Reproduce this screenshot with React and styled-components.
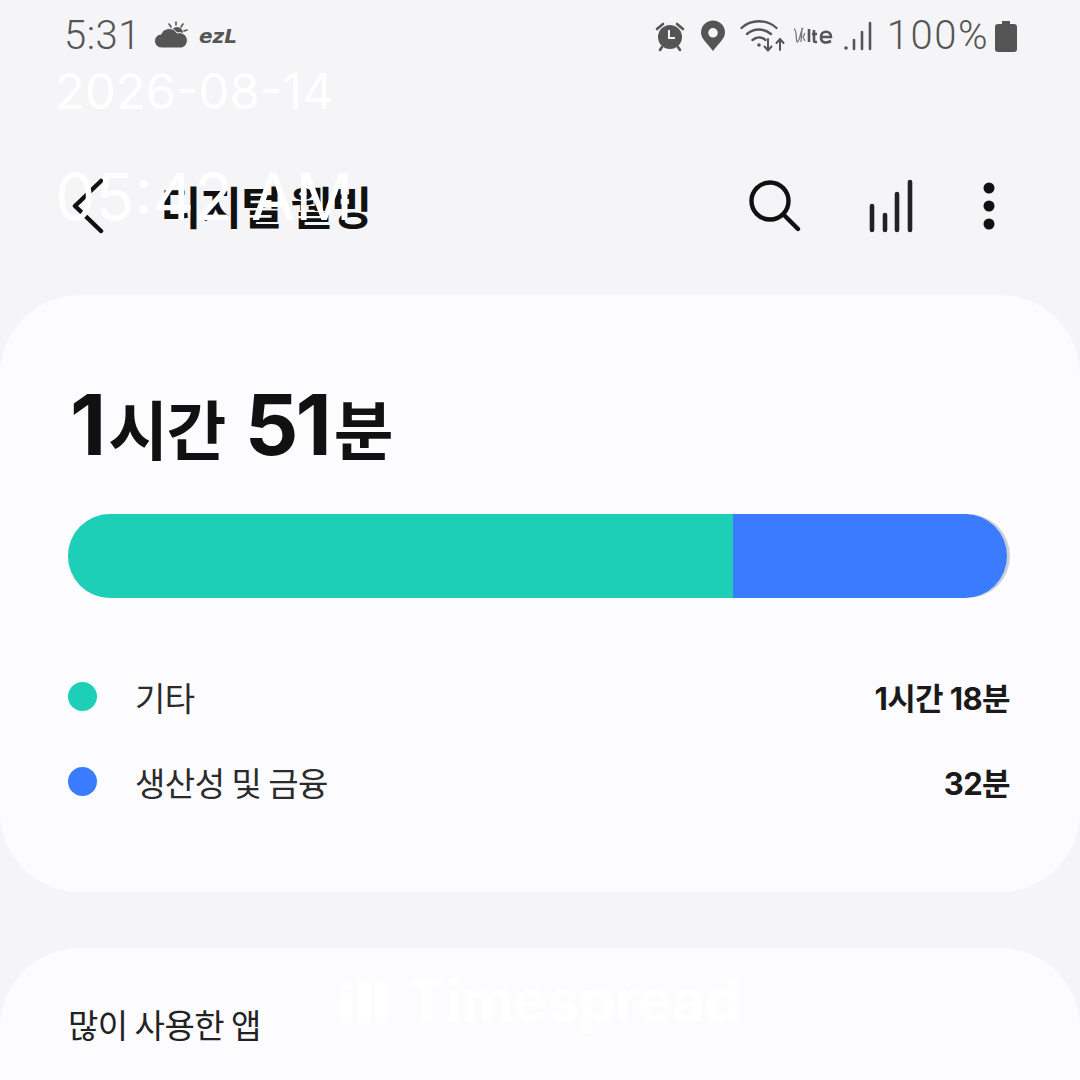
import React from "react";
import styled, { createGlobalStyle } from "styled-components";

const usage = [
  { label: "기타", value: "1시간 18분", color: "#1dcfb6", share: 70.6 },
  { label: "생산성 및 금융", value: "32분", color: "#3a7bff", share: 29.1 },
];

const GlobalStyle = createGlobalStyle`
  html, body {
    margin: 0;
    padding: 0;
    background: #f5f5f7;
  }
  body {
    font-family: "Inter", "Noto Sans CJK KR", sans-serif;
  }
`;

const Page = styled.div`
  position: relative;
  width: 1080px;
  height: 1080px;
  overflow: hidden;
  background: #f5f5f7;
`;

const StatusBar = styled.div`
  display: flex;
  align-items: center;
  justify-content: space-between;
  height: 72px;
  padding: 0 63px 0 64px;
  color: #555;
`;

const StatusGroup = styled.div`
  display: flex;
  align-items: center;
`;

const StatusSlot = styled.span`
  display: flex;
  align-items: center;
  margin-left: ${(p) => p.$ml || 0}px;
`;

const StatusText = styled.span`
  font-family: "Roboto", sans-serif;
  font-size: 40px;
  font-weight: 300;
  letter-spacing: ${(p) => p.$spacing || 0.5}px;
  line-height: 1;
  margin-left: ${(p) => p.$ml || 0}px;
`;

const Carrier = styled.span`
  font-family: "DejaVu Sans", sans-serif;
  font-size: 20px;
  font-weight: 700;
  font-style: italic;
  color: #555;
  margin-left: 10px;
`;

const Header = styled.header`
  display: flex;
  align-items: center;
  height: 179px;
  padding: 44px 85px 0 72px;
`;

const BackButton = styled.div`
  display: flex;
  width: 88px;
`;

const Title = styled.h1`
  flex: 1;
  margin: 0;
  font-family: "Noto Sans CJK KR", sans-serif;
  font-size: 45px;
  font-weight: 700;
  letter-spacing: -1px;
  color: #111;
`;

const HeaderActions = styled.div`
  display: flex;
  align-items: center;
  gap: 68px;
`;

const Card = styled.section`
  background: #fcfcfe;
  border-radius: 80px;
  padding: ${(p) => p.$pad};
  margin-bottom: 56px;
  min-height: ${(p) => p.$minHeight || 0}px;
`;

const TotalTime = styled.div`
  display: flex;
  align-items: baseline;
  height: 96px;
  padding-left: 2px;
  font-family: "Noto Sans CJK KR", sans-serif;
  font-weight: 700;
  font-size: 65px;
  color: #111;
  letter-spacing: -1.5px;
`;

const BigNum = styled.span`
  font-family: "Inter", sans-serif;
  font-size: 84px;
  font-weight: 700;
  letter-spacing: -3px;
  margin-left: ${(p) => p.$ml || 0}px;
  margin-right: 5px;
`;

const Bar = styled.div`
  display: flex;
  height: 84px;
  margin-top: 44px;
  border-radius: 42px;
  overflow: hidden;
  background: #c9ced8;
`;

const Segment = styled.div`
  background: ${(p) => p.$color};
  &:last-child {
    border-radius: 0 42px 42px 0;
  }
`;

const Legend = styled.div`
  display: flex;
  flex-direction: column;
  gap: 42px;
  margin-top: 77px;
`;

const LegendRow = styled.div`
  display: flex;
  align-items: center;
  height: 43px;
`;

const Dot = styled.span`
  width: 29px;
  height: 29px;
  border-radius: 50%;
  margin-right: 38px;
  background: ${(p) => p.$color};
`;

const LegendLabel = styled.span`
  flex: 1;
  font-family: "Noto Sans CJK KR", sans-serif;
  font-size: 33px;
  color: #2b2b2b;
  letter-spacing: -0.5px;
`;

const LegendValue = styled.span`
  font-family: "Inter", "Noto Sans CJK KR", sans-serif;
  font-size: 31px;
  font-weight: 700;
  color: #1a1a1a;
  letter-spacing: -0.6px;
`;

const SectionTitle = styled.h2`
  margin: 0;
  font-family: "Noto Sans CJK KR", sans-serif;
  font-size: 33px;
  font-weight: 400;
  color: #222;
  letter-spacing: -0.5px;
`;

/* Stamp text laid over the screen */
const DateStamp = styled.div`
  position: absolute;
  left: 55px;
  top: 62px;
  font-family: "Inter", sans-serif;
  font-size: 49px;
  color: #fff;
  white-space: nowrap;
`;

const TimeStamp = styled.div`
  position: absolute;
  left: 55px;
  top: 158px;
  font-family: "Inter", sans-serif;
  font-size: 64px;
  color: #fff;
  white-space: nowrap;
`;

const Watermark = styled.div`
  position: absolute;
  left: 340px;
  top: 966px;
  display: flex;
  align-items: center;
  gap: 20px;
  font-family: "Inter", sans-serif;
  font-size: 57px;
  font-weight: 700;
  color: #fff;
  white-space: nowrap;
`;

const WeatherIcon = () => (
  <svg width="36" height="32" viewBox="0 0 36 32">
    <g stroke="#555" strokeWidth="1.6" strokeLinecap="round">
      <path d="M23 2v3M30 4l-2 3M16 4l2 3M34 10l-3 1" />
    </g>
    <circle cx="24" cy="13" r="6" fill="#555" />
    <path
      d="M9 28a7 7 0 0 1-1-14 9 9 0 0 1 16-1 7.500 7.500 0 0 1 5 15z"
      fill="#555"
      stroke="#f5f5f7"
      strokeWidth="1"
    />
  </svg>
);

const AlarmIcon = () => (
  <svg width="32" height="32" viewBox="0 0 32 32">
    <path d="M3 9l6-5M29 9l-6-5M8 27l-2 3M24 27l2 3" stroke="#555" strokeWidth="2.6" strokeLinecap="round" />
    <circle cx="16" cy="17" r="12" fill="#555" />
    <path d="M15 10v8h6" fill="none" stroke="#f5f5f7" strokeWidth="2" />
  </svg>
);

const PinIcon = () => (
  <svg width="26" height="32" viewBox="0 0 26 32">
    <path
      fillRule="evenodd"
      d="M13 31C8 24 1 19 1 12.500a12 12 0 0 1 24 0C25 19 18 24 13 31zM13 8a4.800 4.800 0 1 0 0 9.600A4.800 4.800 0 0 0 13 8z"
      fill="#555"
    />
  </svg>
);

const WifiIcon = () => (
  <svg width="46" height="34" viewBox="0 0 46 34" fill="none" stroke="#555" strokeLinecap="round">
    <path d="M1.500 9C11 0 27 0 36.500 9" strokeWidth="2.400" />
    <path d="M7 15c7-6 17-6 24 0" strokeWidth="2.400" />
    <path d="M12.500 21c4-3.500 9-3.500 13 0" strokeWidth="2.400" />
    <circle cx="19" cy="26" r="1.800" fill="#555" stroke="none" />
    <path d="M28 20v11M24.500 27.500L28 31.500l3.500-4M40 31V20M36.500 24L40 20l3.500 4" strokeWidth="2" />
  </svg>
);

const VolteIcon = () => (
  <svg width="40" height="24" viewBox="0 0 40 24" fill="none">
    <path d="M1 5c3 0 2 13 3 13 3 0 3-10 6-14M9 4L8 18M12 9l-2 4 2 4" stroke="#777" strokeWidth="1.300" />
    <path d="M16 5v13M21 6v11c0 1 1 1 3 1M19 10h5M28 13h10c0-7-10-7-10 0s6 6 10 4" stroke="#555" strokeWidth="2.600" />
  </svg>
);

const SignalIcon = () => (
  <svg width="30" height="32" viewBox="0 0 30 32" stroke="#555" strokeWidth="2.600" strokeLinecap="round">
    <circle cx="3" cy="28" r="1.800" fill="#555" stroke="none" />
    <path d="M11 29v-9M19 29V12M27 29V3" />
  </svg>
);

const BatteryIcon = () => (
  <svg width="22" height="32" viewBox="0 0 22 32">
    <path d="M7 1h8v3h4a3 3 0 0 1 3 3v22a3 3 0 0 1-3 3H3a3 3 0 0 1-3-3V7a3 3 0 0 1 3-3h4z" fill="#555" />
  </svg>
);

const ChevronLeft = () => (
  <svg width="32" height="56" viewBox="0 0 32 56" fill="none" stroke="#111" strokeWidth="4.500" strokeLinecap="round" strokeLinejoin="round">
    <path d="M29 3L3 28l26 25" />
  </svg>
);

const SearchIcon = () => (
  <svg width="52" height="52" viewBox="0 0 52 52" fill="none" stroke="#111" strokeWidth="4.400" strokeLinecap="round">
    <circle cx="21" cy="21" r="18.500" />
    <path d="M35 35l14 14" />
  </svg>
);

const StatsIcon = () => (
  <svg width="46" height="54" viewBox="0 0 46 54" fill="none" stroke="#222" strokeWidth="4.600" strokeLinecap="round">
    <path d="M3 51V27M16 51V36M28 51V15M41 51V3" />
  </svg>
);

const MoreIcon = () => (
  <svg width="12" height="48" viewBox="0 0 12 48" fill="#111">
    <circle cx="6" cy="6" r="5.500" />
    <circle cx="6" cy="24" r="5.500" />
    <circle cx="6" cy="42" r="5.500" />
  </svg>
);

const BarsGlyph = () => (
  <svg width="48" height="44" viewBox="0 0 48 44" fill="#fff">
    <rect x="0" y="14" width="12" height="30" />
    <rect x="0" y="2" width="12" height="8" />
    <rect x="18" y="2" width="13" height="42" />
    <rect x="35" y="2" width="13" height="42" />
  </svg>
);

export default function App() {
  return (
    <>
      <GlobalStyle />
      <Page>
        <StatusBar>
          <StatusGroup>
            <StatusText>5:31</StatusText>
            <StatusSlot $ml={12}>
              <WeatherIcon />
            </StatusSlot>
            <Carrier>ezL</Carrier>
          </StatusGroup>
          <StatusGroup>
            <AlarmIcon />
            <StatusSlot $ml={14}>
              <PinIcon />
            </StatusSlot>
            <StatusSlot $ml={14}>
              <WifiIcon />
            </StatusSlot>
            <StatusSlot $ml={7}>
              <VolteIcon />
            </StatusSlot>
            <StatusSlot $ml={10}>
              <SignalIcon />
            </StatusSlot>
            <StatusText $ml={14} $spacing={1.5}>100%</StatusText>
            <StatusSlot $ml={6}>
              <BatteryIcon />
            </StatusSlot>
          </StatusGroup>
        </StatusBar>

        <Header>
          <BackButton>
            <ChevronLeft />
          </BackButton>
          <Title>디지털 웰빙</Title>
          <HeaderActions>
            <SearchIcon />
            <StatsIcon />
            <MoreIcon />
          </HeaderActions>
        </Header>

        <Card $pad="79px 70px 89px 68px">
          <TotalTime>
            <BigNum>1</BigNum>시간<BigNum $ml={20}>51</BigNum>분
          </TotalTime>
          <Bar>
            {usage.map((item) => (
              <Segment key={item.label} $color={item.color} style={{ width: `${item.share}%` }} />
            ))}
          </Bar>
          <Legend>
            {usage.map((item) => (
              <LegendRow key={item.label}>
                <Dot $color={item.color} />
                <LegendLabel>{item.label}</LegendLabel>
                <LegendValue>{item.value}</LegendValue>
              </LegendRow>
            ))}
          </Legend>
        </Card>

        <Card $pad="52px 68px" $minHeight={300}>
          <SectionTitle>많이 사용한 앱</SectionTitle>
        </Card>

        <DateStamp>2026-08-14</DateStamp>
        <TimeStamp>05:42 AM</TimeStamp>
        <Watermark>
          <BarsGlyph />
          Timespread
        </Watermark>
      </Page>
    </>
  );
}
